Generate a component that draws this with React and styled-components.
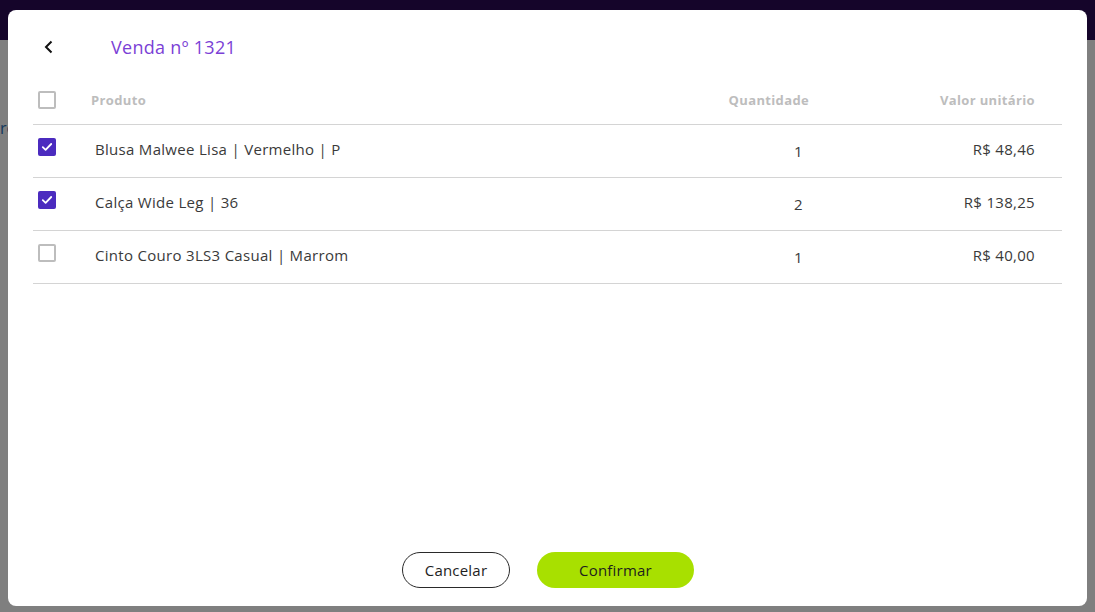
import styled, { createGlobalStyle } from "styled-components";

const GlobalStyle = createGlobalStyle`
  * { box-sizing: border-box; }
  html, body { margin: 0; height: 100%; }
  body {
    font-family: "Open Sans", "Noto Sans", sans-serif;
    background-color: #ffffff;
    overflow: hidden;
  }
`;

const Page = styled.div`
  width: 100vw;
  height: 100vh;
  position: relative;
  background-color: #ffffff;
`;

const TopBar = styled.div`
  height: 40px;
  background-color: #2b0a55;
`;

const PageText = styled.div`
  padding-top: 77px;
  margin-left: -22px;
  color: #2a6fb8;
  font-size: 16px;
`;

const Overlay = styled.div`
  position: fixed;
  inset: 0;
  background-color: rgba(0, 0, 0, 0.5);
  padding: 10px 8px 6px;
  display: flex;
`;

const Modal = styled.div`
  flex: 1;
  background-color: #ffffff;
  border-radius: 8px;
  padding: 26px 25px 18px;
  display: flex;
  flex-direction: column;
`;

const Header = styled.div`
  display: flex;
  align-items: center;
  height: 22px;
  padding-left: 4px;
`;

const BackButton = styled.button`
  border: none;
  background: none;
  padding: 0;
  width: 24px;
  height: 24px;
  display: flex;
  align-items: center;
  justify-content: center;
  cursor: pointer;
`;

const Title = styled.h2`
  margin: 0 0 0 50px;
  font-size: 18px;
  font-weight: 400;
  color: #7b3fd6;
  letter-spacing: 0.3px;
`;

const Table = styled.div`
  margin-top: 21px;
  display: flex;
  flex-direction: column;
`;

const Row = styled.div`
  display: grid;
  grid-template-columns: 58px 1fr 180px 226px;
  align-items: center;
  height: ${(p) => (p.$head ? "46px" : "53px")};
  border-bottom: 1px solid #d4d4d4;
  padding-right: 27px;
`;

const HeadCell = styled.div`
  font-size: 13px;
  font-weight: 700;
  color: #bdbdbd;
  margin-top: -3px;
  letter-spacing: 0.35px;
  text-align: ${(p) => p.$align || "left"};
`;

const Cell = styled.div`
  font-size: 15px;
  color: #3a3a3a;
  letter-spacing: 0.3px;
  margin-top: ${(p) => p.$shift || "-4px"};
  text-align: ${(p) => p.$align || "left"};
  padding-left: ${(p) => p.$indent || "0"};
  padding-right: ${(p) => p.$pr || "0"};
`;

const BoxWrap = styled.div`
  padding-left: 5px;
  display: flex;
  align-items: center;
  margin-top: ${(p) => p.$up || "0"};
`;

const Box = styled.span`
  width: 18px;
  height: 18px;
  border-radius: 2px;
  border: ${(p) => (p.$checked ? "none" : "2px solid #bdbdbd")};
  background-color: ${(p) => (p.$checked ? "#4b2bbf" : "#ffffff")};
  display: flex;
  align-items: center;
  justify-content: center;
`;

const Footer = styled.div`
  margin-top: auto;
  display: flex;
  justify-content: center;
  gap: 27px;
  padding-left: 1px;
`;

const Button = styled.button`
  height: 36px;
  border-radius: 18px;
  font-family: inherit;
  font-size: 15px;
  letter-spacing: 0.2px;
  color: #1e1e1e;
  cursor: pointer;
  width: ${(p) => (p.$primary ? "157px" : "108px")};
  border: ${(p) => (p.$primary ? "none" : "1px solid #2a2a2a")};
  background-color: ${(p) => (p.$primary ? "#a8e000" : "#ffffff")};
`;

function Checkbox({ checked }) {
  return (
    <Box $checked={checked}>
      {checked && (
        <svg width="12" height="10" viewBox="0 0 12 10">
          <path
            d="M1.8 5.2 L4.6 7.8 L10.2 2"
            fill="none"
            stroke="#ffffff"
            strokeWidth="1.8"
            strokeLinecap="round"
            strokeLinejoin="round"
          />
        </svg>
      )}
    </Box>
  );
}

const items = [
  { name: "Blusa Malwee Lisa | Vermelho | P", qty: 1, price: "R$ 48,46", checked: true },
  { name: "Calça Wide Leg | 36", qty: 2, price: "R$ 138,25", checked: true },
  { name: "Cinto Couro 3LS3 Casual | Marrom", qty: 1, price: "R$ 40,00", checked: false },
];

export default function App() {
  return (
    <>
      <GlobalStyle />
      <Page>
        <TopBar />
        <PageText>Filtro</PageText>
        <Overlay>
          <Modal>
            <Header>
              <BackButton aria-label="Voltar">
                <svg width="16" height="16" viewBox="0 0 16 16">
                  <path
                    d="M10.5 2.5 L5 8 L10.5 13.5"
                    fill="none"
                    stroke="#111111"
                    strokeWidth="2"
                  />
                </svg>
              </BackButton>
              <Title>Venda nº 1321</Title>
            </Header>

            <Table>
              <Row $head>
                <BoxWrap $up="-3px">
                  <Checkbox checked={false} />
                </BoxWrap>
                <HeadCell>Produto</HeadCell>
                <HeadCell $align="right">Quantidade</HeadCell>
                <HeadCell $align="right">Valor unitário</HeadCell>
              </Row>
              {items.map((item) => (
                <Row key={item.name}>
                  <BoxWrap $up="-8px">
                    <Checkbox checked={item.checked} />
                  </BoxWrap>
                  <Cell $indent="4px">{item.name}</Cell>
                  <Cell $align="right" $pr="6px" $shift="-1px">
                    {item.qty}
                  </Cell>
                  <Cell $align="right">{item.price}</Cell>
                </Row>
              ))}
            </Table>

            <Footer>
              <Button>Cancelar</Button>
              <Button $primary>Confirmar</Button>
            </Footer>
          </Modal>
        </Overlay>
      </Page>
    </>
  );
}
